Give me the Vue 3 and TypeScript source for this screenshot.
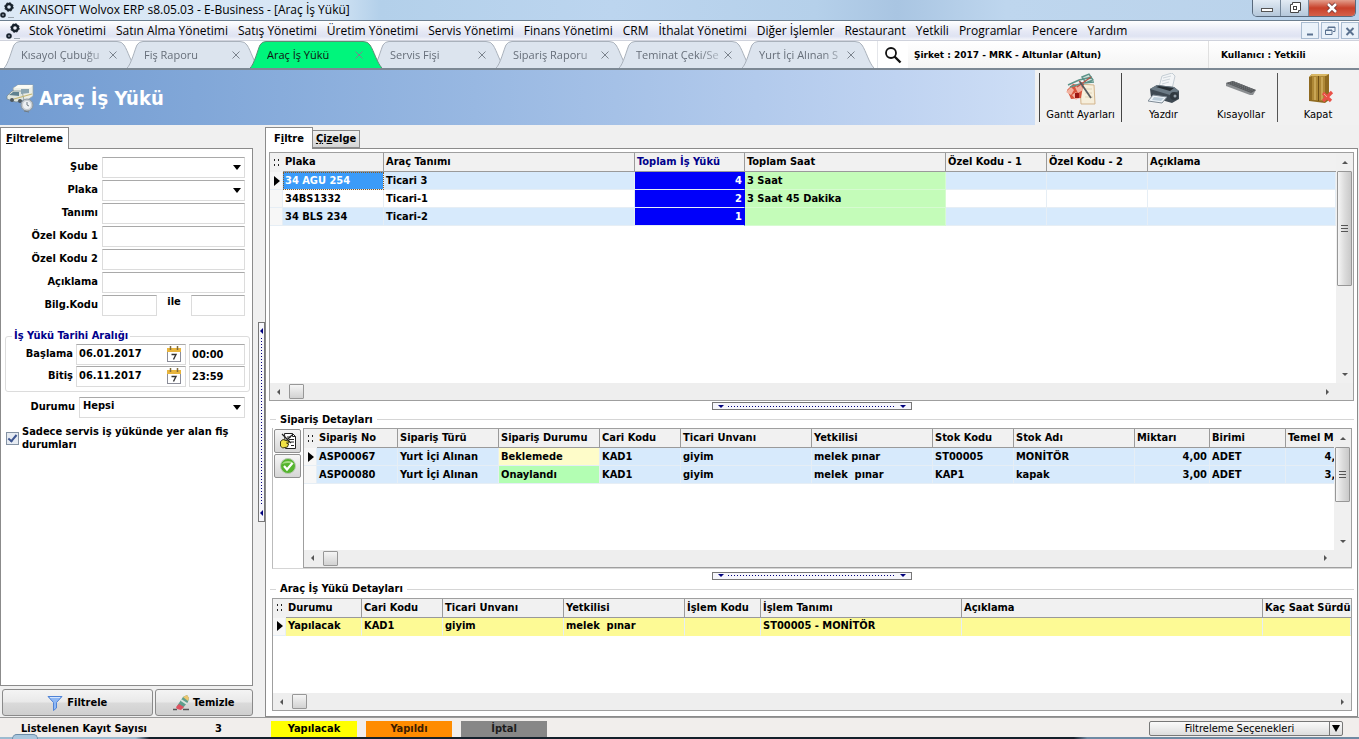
<script setup lang="ts">
import { ref } from 'vue'

interface Column {
  title: string
  width?: number
  numeric?: boolean
  accent?: boolean
}
interface Cell {
  text: string
  tone?: string
}
interface Grid {
  id: string
  label: string
  columns: Column[]
  rows: Cell[][]
  vertical: boolean
}

const t = (text: string, tone?: string): Cell => ({ text, tone })

const menus = [
  'Stok Yönetimi', 'Satın Alma Yönetimi', 'Satış Yönetimi', 'Üretim Yönetimi', 'Servis Yönetimi',
  'Finans Yönetimi', 'CRM', 'İthalat Yönetimi', 'Diğer İşlemler', 'Restaurant', 'Yetkili',
  'Programlar', 'Pencere', 'Yardım',
]
const tabs = [
  'Kısayol Çubuğu', 'Fiş Raporu', 'Araç İş Yükü', 'Servis Fişi', 'Sipariş Raporu', 'Teminat Çeki/Se', 'Yurt İçi Alınan S',
]
const activeTab = ref(2)

const vehicles: Grid = {
  id: 'vehicles',
  label: 'Araçlar',
  vertical: true,
  columns: [
    { title: 'Plaka', width: 101 },
    { title: 'Araç Tanımı', width: 251 },
    { title: 'Toplam İş Yükü', width: 110, numeric: true, accent: true },
    { title: 'Toplam Saat', width: 201 },
    { title: 'Özel Kodu - 1', width: 101 },
    { title: 'Özel Kodu - 2', width: 101 },
    { title: 'Açıklama' },
  ],
  rows: [
    [t('34 AGU 254', 'selected'), t('Ticari 3'), t('4', 'load'), t('3 Saat', 'hours'), t(''), t(''), t('')],
    [t('34BS1332'), t('Ticari-1'), t('2', 'load'), t('3 Saat 45 Dakika', 'hours'), t(''), t(''), t('')],
    [t('34 BLS 234'), t('Ticari-2'), t('1', 'load'), t('', 'hours'), t(''), t(''), t('')],
  ],
}
const orders: Grid = {
  id: 'orders',
  label: 'Sipariş Detayları',
  vertical: true,
  columns: [
    { title: 'Sipariş No', width: 81 },
    { title: 'Sipariş Türü', width: 101 },
    { title: 'Sipariş Durumu', width: 101 },
    { title: 'Cari Kodu', width: 81 },
    { title: 'Ticari Unvanı', width: 131 },
    { title: 'Yetkilisi', width: 121 },
    { title: 'Stok Kodu', width: 81 },
    { title: 'Stok Adı', width: 121 },
    { title: 'Miktarı', width: 75, numeric: true },
    { title: 'Birimi', width: 76 },
    { title: 'Temel Miktarı', width: 66, numeric: true },
  ],
  rows: [
    [t('ASP00067'), t('Yurt İçi Alınan'), t('Beklemede', 'waiting'), t('KAD1'), t('giyim'), t('melek pınar'), t('ST00005'), t('MONİTÖR'), t('4,00'), t('ADET'), t('4,00')],
    [t('ASP00080'), t('Yurt İçi Alınan'), t('Onaylandı', 'approved'), t('KAD1'), t('giyim'), t('melek  pınar'), t('KAP1'), t('kapak'), t('3,00'), t('ADET'), t('3,00')],
  ],
}
const loads: Grid = {
  id: 'loads',
  label: 'Araç İş Yükü Detayları',
  vertical: false,
  columns: [
    { title: 'Durumu', width: 76 },
    { title: 'Cari Kodu', width: 81 },
    { title: 'Ticari Unvanı', width: 121 },
    { title: 'Yetkilisi', width: 121 },
    { title: 'İşlem Kodu', width: 76 },
    { title: 'İşlem Tanımı', width: 201 },
    { title: 'Açıklama', width: 301 },
    { title: 'Kaç Saat Sürdü' },
  ],
  rows: [
    [t('Yapılacak'), t('KAD1'), t('giyim'), t('melek  pınar'), t(''), t('ST00005 - MONİTÖR'), t(''), t('')],
  ],
}
const grids: Grid[] = [vehicles, orders, loads]

const textFields = [
  { id: 'tanimi', label: 'Tanımı' },
  { id: 'ozel1', label: 'Özel Kodu 1' },
  { id: 'ozel2', label: 'Özel Kodu 2' },
  { id: 'aciklama', label: 'Açıklama' },
]
const dates = ref([
  { id: 'baslama', label: 'Başlama', day: '06.01.2017', hour: '00:00' },
  { id: 'bitis', label: 'Bitiş', day: '06.11.2017', hour: '23:59' },
])
const onlyService = ref(true)
</script>

<template>
  <div class="app">
    <header class="titlebar">
      <svg class="gear" viewBox="0 0 16 18" aria-hidden="true">
        <circle cx="9" cy="6" r="3" fill="none" stroke="#18222c" stroke-width="2.4" />
        <circle cx="9" cy="6" r="4.4" fill="none" stroke="#18222c" stroke-width=".7" stroke-dasharray="2 1.4" />
        <circle cx="3" cy="14" r="1.8" fill="none" stroke="#18222c" stroke-width="2" />
        <path d="M8 16.500h6" stroke="#9aa5ae" stroke-width="1" />
      </svg>
      <h1>AKINSOFT Wolvox ERP s8.05.03 - E-Business - [Araç İş Yükü]</h1>
      <div class="window-buttons">
        <button type="button" aria-label="Simge durumuna küçült">
          <svg viewBox="0 0 14 12"><rect x="1.500" y="6.500" width="11" height="3" fill="#fff" stroke="#555" /></svg>
        </button>
        <button type="button" aria-label="Önceki boyut">
          <svg viewBox="0 0 14 12"><path d="M4.500 .5h8v8h-2v2h-8v-8h2z" fill="#fff" stroke="#444" /><rect x="5.500" y="4.500" width="3" height="3" fill="none" stroke="#444" /></svg>
        </button>
        <button type="button" class="close" aria-label="Kapat">
          <svg viewBox="0 0 14 12"><path d="M3 2l8 8M11 2l-8 8" stroke="#6b3030" stroke-width="4" /><path d="M3 2l8 8M11 2l-8 8" stroke="#fff" stroke-width="2.500" /></svg>
        </button>
      </div>
    </header>

    <nav class="menubar">
      <svg class="gear" viewBox="0 0 16 18" aria-hidden="true">
        <circle cx="9" cy="6" r="3" fill="none" stroke="#18222c" stroke-width="2.4" />
        <circle cx="9" cy="6" r="4.4" fill="none" stroke="#18222c" stroke-width=".7" stroke-dasharray="2 1.4" />
        <circle cx="3" cy="14" r="1.8" fill="none" stroke="#18222c" stroke-width="2" />
        <path d="M8 16.500h6" stroke="#9aa5ae" stroke-width="1" />
      </svg>
      <button v-for="m in menus" :key="m" type="button" class="menu">{{ m }}</button>
      <div class="child-buttons">
        <button type="button" aria-label="Pencereyi küçült"><svg viewBox="0 0 12 12"><path d="M3 9.500h6" stroke="#5b7290" stroke-width="2" /></svg></button>
        <button type="button" aria-label="Pencereyi geri yükle"><svg viewBox="0 0 12 12"><path d="M4 4.500V2h7v4.500H9M4 2.500h7M1.500 5h6.500v4.500H1.500zM1.500 5.500H8" fill="none" stroke="#5b7290" /></svg></button>
        <button type="button" aria-label="Pencereyi kapat"><svg viewBox="0 0 12 12"><path d="M2.500 3l7 7M9.500 3l-7 7" stroke="#5b7290" stroke-width="2" /></svg></button>
      </div>
    </nav>

    <div class="tabstrip">
      <div class="tabs">
        <div v-for="(name, i) in tabs" :key="name" class="tab" :class="{ active: i === activeTab }">
          <svg class="tab-shape" viewBox="0 0 132 27" preserveAspectRatio="none" aria-hidden="true">
            <path d="M0 27C4 24 8 8 10 4Q12 .5 16 .5H113Q118 .5 120 4C124 10 127 22 132 27" />
          </svg>
          <button type="button" class="tab-name" @click="activeTab = i">{{ name }}</button>
          <button type="button" class="tab-close" :aria-label="name + ' sekmesini kapat'">
            <svg viewBox="0 0 8 8"><path d="M.5 .5l7 7M7.500 .5l-7 7" stroke="currentColor" /></svg>
          </button>
        </div>
      </div>
      <button type="button" class="search" aria-label="Ara">
        <svg viewBox="0 0 18 18"><circle cx="7" cy="7" r="5" fill="none" stroke="#111" stroke-width="1.800" /><path d="M10.500 10.500l6 6" stroke="#111" stroke-width="2.400" /></svg>
      </button>
      <div class="company">Şirket : 2017 - MRK - Altunlar (Altun)</div>
      <div class="user">Kullanıcı : Yetkili</div>
    </div>

    <section class="banner">
      <svg class="van" viewBox="0 0 28 30" aria-hidden="true">
        <path d="M7 5L12 2 27 2 27 13 20 18 8 14z" fill="#eceee6" stroke="#98a3a4" stroke-width=".7" />
        <path d="M12 2L27 2 24 5 8 5z" fill="#fbfbf4" />
        <path d="M1 13L6 8 16 8 18 17 10 19 1 16z" fill="#dfe5df" stroke="#74868c" stroke-width=".7" />
        <path d="M3 12L7 9 13 9 13 13z" fill="#5f8190" />
        <path d="M15 6h8v4l-8 1z" fill="#8ba5b1" />
        <path d="M8 16L26 11" stroke="#c5b672" stroke-width="1.200" />
        <circle cx="6" cy="17" r="2" fill="#4d575d" />
        <circle cx="14" cy="18" r="2" fill="#4d575d" />
        <circle cx="21" cy="22" r="6" fill="#c5cbd0" stroke="#8b969e" />
        <circle cx="21" cy="22" r="4" fill="#eef1f3" />
        <path d="M21 19v3l2 1M18 28l5 1" stroke="#6f7b84" fill="none" />
      </svg>
      <h2>Araç İş Yükü</h2>
      <div class="tools">
        <button type="button" class="tool gantt">
          <svg viewBox="0 0 32 32" aria-hidden="true">
            <path d="M15 11L29 12 30 31 16 31z" fill="#f6eedb" stroke="#d3b58d" />
            <path d="M19 16h8M20 20h7M20 24h8" stroke="#e0d4b8" />
            <path d="M2 17L8 11 18 13 16 25 6 26z" fill="#d8553d" />
            <path d="M1 19l5-5 3 3-3 5zM10 14l6-2 2 5-5 3zM7 22l4-3 3 5-3 3z" fill="#f2b3a0" />
            <rect x="10" y="20" width="4" height="5" fill="#9c1713" />
            <path d="M3 12L14 7 27 4M5 14L18 10 29 9M17 4l7-3 4 6-7 3z" stroke="#5d9389" stroke-width="1.400" fill="#cfe0d9" />
            <path d="M14 8l5 4M12 14l14-10" stroke="#b9564a" stroke-width="1.300" />
            <path d="M15 9L26 25" stroke="#54595e" stroke-width="1.800" />
          </svg>
          <span>Gantt Ayarları</span>
        </button>
        <button type="button" class="tool print">
          <svg viewBox="0 0 32 32" aria-hidden="true">
            <path d="M11 14L14 3 24 0 27 3 24 16z" fill="#f3f5f7" stroke="#c3ccd3" />
            <path d="M15 5l8-2M14 8l8-2M14 11l7-2" stroke="#c3ccd3" stroke-width=".8" />
            <path d="M2 16L9 12 26 14 31 18 31 26 24 30 3 24z" fill="#3f4a53" />
            <path d="M2 16L9 12 26 14 31 18 22 22z" fill="#6b7a85" />
            <path d="M8 14L11 13 26 15 22 18z" fill="#252c32" />
            <circle cx="26" cy="23" r="4" fill="#303940" />
            <circle cx="27" cy="23" r="1.500" fill="#95a1aa" />
            <path d="M5 22L19 24 14 30 0 28z" fill="#edf3f8" stroke="#7f8b95" />
            <path d="M6 24l10 1-3 3-9-1z" fill="#bccdd9" />
          </svg>
          <span>Yazdır</span>
        </button>
        <button type="button" class="tool keys">
          <svg viewBox="0 0 32 32" aria-hidden="true">
            <path d="M1 10L8 8 31 17 28 22 25 22 1 13z" fill="#8b8e91" />
            <path d="M1 10L8 8 31 17 26 20z" fill="#55585b" />
            <path d="M4 10l22 8.500M6 9l22 8.500M8 8.500l20 8" stroke="#808487" stroke-dasharray="1 1" stroke-width=".8" />
          </svg>
          <span>Kısayollar</span>
        </button>
        <button type="button" class="tool exit">
          <svg viewBox="0 0 32 32" aria-hidden="true">
            <path d="M7 4L10 1 27 1 27 27 23 30 7 28z" fill="#8f6a20" />
            <path d="M10 3h13v25L10 27z" fill="#ae8836" />
            <path d="M13 4v23M20 4v23" stroke="#c9a656" stroke-width="2" />
            <path d="M16.500 2v26" stroke="#6f4f14" />
            <path d="M7 4L10 1 27 1 24 3 10 3z" fill="#d8b765" />
            <path d="M21 20l8 8M30 19l-9 9" stroke="#ea5148" stroke-width="3.200" />
            <path d="M22 21l3 3" stroke="#f6a095" />
          </svg>
          <span>Kapat</span>
        </button>
      </div>
    </section>

    <main class="workspace">
      <aside class="filter">
        <div class="filter-tabs"><button type="button" class="page-tab"><u>F</u>iltreleme</button></div>
        <form class="filter-body" @submit.prevent>
          <div class="field">
            <label for="sube">Şube</label>
            <div class="combo"><select id="sube"><option></option></select><i class="caret"></i></div>
          </div>
          <div class="field">
            <label for="plaka">Plaka</label>
            <div class="combo"><select id="plaka"><option></option></select><i class="caret"></i></div>
          </div>
          <div v-for="f in textFields" :key="f.id" class="field">
            <label :for="f.id">{{ f.label }}</label>
            <input :id="f.id" type="text" />
          </div>
          <div class="field">
            <label for="bilg1">Bilg.Kodu</label>
            <div class="range">
              <input id="bilg1" type="text" />
              <label for="bilg2">ile</label>
              <input id="bilg2" type="text" />
            </div>
          </div>

          <fieldset class="dates">
            <legend>İş Yükü Tarihi Aralığı</legend>
            <div v-for="d in dates" :key="d.id" class="date-row">
              <label :for="d.id">{{ d.label }}</label>
              <div class="date-box">
                <input :id="d.id" v-model="d.day" type="text" />
                <button type="button" :aria-label="d.label + ' takvimi'">
                  <svg viewBox="0 0 14 16">
                    <rect x=".5" y="2.500" width="13" height="13" fill="#fff" stroke="#8b8d99" />
                    <rect x="0" y="2" width="14" height="4" fill="#e8b53d" />
                    <path d="M3.500 0v4M10.500 0v4" stroke="#7f6a3a" stroke-width="1.500" />
                    <path d="M4.500 8.500h4.500l-2.500 5" fill="none" stroke="#333" stroke-width="1.400" />
                  </svg>
                </button>
              </div>
              <input v-model="d.hour" class="hour" type="text" :aria-label="d.label + ' saati'" />
            </div>
          </fieldset>

          <div class="field state">
            <label for="durumu">Durumu</label>
            <div class="combo"><select id="durumu"><option>Hepsi</option></select><i class="caret"></i></div>
          </div>
          <label class="check">
            <input v-model="onlyService" type="checkbox" />
            <span>Sadece servis iş yükünde yer alan fiş durumları</span>
          </label>
        </form>
        <div class="filter-actions">
          <button type="button" class="run">
            <svg viewBox="0 0 16 16" aria-hidden="true"><path d="M1 1.500h14L9.500 7.500V13l-3 2.500v-8z" fill="#8fb8f4" stroke="#4f83d6" /><path d="M3 2.500h10" stroke="#d5e5fd" /></svg>
            Filtrele
          </button>
          <button type="button" class="clear">
            <svg viewBox="0 0 16 16" aria-hidden="true">
              <path d="M0 14.500h4M10 14.500h6" stroke="#555" stroke-width="1.500" />
              <path d="M4 11L10 2 14 0 16 3 15 7 9 14 5 14z" fill="#5f9f8e" />
              <path d="M10 2L14 0 16 3 15 6z" fill="#edc66f" />
              <path d="M8 5l6 4" stroke="#d9e5dd" stroke-width="2" />
              <path d="M3 12l3-3 5 3-3 3-4-1z" fill="#df5260" />
            </svg>
            Temizle
          </button>
        </div>
      </aside>

      <div class="side-splitter"><button type="button" class="grip upright" aria-label="Filtre panelini daralt"><i></i><b></b><i></i></button></div>

      <section class="content">
        <div class="content-tabs">
          <button type="button" class="page-tab">F<u>i</u>ltre</button>
          <button type="button" class="page-tab idle"><u>Ç</u>i<u>z</u>elge</button>
        </div>
        <div class="content-body">
          <template v-for="g in grids" :key="g.id">
            <template v-if="g.id !== 'vehicles'">
              <div class="handle-row"><button type="button" class="grip" :aria-label="g.label + ' bölümünü daralt'"><i></i><b></b><i></i></button></div>
              <h3 class="group-title">{{ g.label }}</h3>
            </template>
            <div class="pane" :class="g.id">
              <div v-if="g.id === 'orders'" class="side-tools">
                <button type="button" aria-label="Fişi düzenle">
                  <svg viewBox="0 0 18 18">
                    <path d="M5.500 1.500h8l3 3v12h-10z" fill="#fff" stroke="#222" />
                    <path d="M13.500 1.500v3h3M8 5h4M10 7.500h5M12 10h3M12 13.500h3" stroke="#222" fill="none" />
                    <path d="M3 2l9 9M13 3L7 9" stroke="#222" stroke-width="1.200" />
                    <path d="M1.500 9.500L4 7.500l6 2v1.500H7.500l2 1-1 3-5 1-2-2z" fill="#f0e244" stroke="#3d3a12" />
                  </svg>
                </button>
                <button type="button" aria-label="Onayla">
                  <svg viewBox="0 0 18 18"><circle cx="9" cy="9" r="7.500" fill="#55b52f" stroke="#b9c9b2" /><path d="M3 7a6.500 5 0 0 1 12 0q-6-2-12 0z" fill="#a6dc83" /><path d="M5 9l3 3.500L13.500 6" fill="none" stroke="#fff" stroke-width="2.200" /></svg>
                </button>
              </div>
              <div class="grid-frame" :class="{ scrolls: g.vertical }">
                <div class="viewport">
                  <table :aria-label="g.label">
                    <colgroup>
                      <col class="marker-col" />
                      <col v-for="c in g.columns" :key="c.title" :style="c.width ? { width: c.width + 'px' } : undefined" />
                    </colgroup>
                    <thead>
                      <tr>
                        <th class="marker"><svg viewBox="0 0 8 8" aria-hidden="true"><path d="M1 0h1v2h-1zM5 0h1v2h-1zM1 5h1v2h-1zM5 5h1v2h-1z" fill="#222" /></svg></th>
                        <th v-for="c in g.columns" :key="c.title" scope="col" :class="{ accent: c.accent }">{{ c.title }}</th>
                      </tr>
                    </thead>
                    <tbody>
                      <tr v-for="(row, r) in g.rows" :key="r">
                        <td class="marker"><svg v-if="r === 0" viewBox="0 0 6 10" aria-hidden="true"><path d="M0 0l6 5-6 5z" fill="#000" /></svg></td>
                        <td v-for="(cell, c) in row" :key="c" :class="['cell', cell.tone, { numeric: g.columns[c].numeric }]">{{ cell.text }}</td>
                      </tr>
                    </tbody>
                  </table>
                </div>
                <div v-if="g.vertical" class="vbar">
                  <i class="arrow up"></i>
                  <div class="vtrack"><div class="vthumb"><b></b></div></div>
                  <i class="arrow down"></i>
                </div>
                <div class="hbar"><i class="arrow left"></i><div class="hthumb"></div><i class="arrow right"></i></div>
              </div>
            </div>
          </template>
        </div>
      </section>
    </main>

    <footer class="status">
      <span class="count-label">Listelenen Kayıt Sayısı</span>
      <span class="count">3</span>
      <span class="badge todo">Yapılacak</span>
      <span class="badge done">Yapıldı</span>
      <span class="badge cancelled">İptal</span>
      <button type="button" class="options"><span>Filtreleme Seçenekleri</span><i></i></button>
    </footer>
    <div class="taskbar"><i></i></div>
  </div>
</template>

<style>
body { margin: 0; }
</style>

<style scoped>
* { box-sizing: border-box; }
.app {
  display: flex; flex-direction: column; height: 100vh; min-height: 620px; overflow: hidden;
  background: #f0f0f0; color: #000;
  font: bold 11px/14px "DejaVu Sans Condensed", "DejaVu Sans", sans-serif;
}
button, input, select { font: inherit; color: inherit; margin: 0; padding: 0; border: 0; background: none; border-radius: 0; }
h1, h2, h3 { margin: 0; font: inherit; }
svg { display: block; }

.titlebar, .menubar { font: 12px/16px "Open Sans", "Noto Sans", sans-serif; }
.titlebar {
  display: flex; align-items: center; flex: none; height: 21px; border-bottom: 1px solid #6d7f8f;
  background: linear-gradient(90deg, #dce9f6 0, #d6e6f5 24%, #b3d0ea 28%, #bcd5ef 45%, #b5d0ea 60%, #a9c5e2 66%, #bed6ee 74%, #b9d2ea 100%);
}
.gear { width: 16px; height: 18px; flex: none; }
.titlebar h1 { margin-left: 4px; font-weight: 400; flex: 1; white-space: nowrap; }
.window-buttons { display: flex; align-self: flex-start; margin-right: 3px; border: 1px solid #58697c; border-top: 0; border-radius: 0 0 5px 5px; overflow: hidden; }
.window-buttons button { display: grid; place-items: center; width: 28px; height: 16px; background: linear-gradient(#e2ebf4, #b4c7da); border-right: 1px solid #74879a; }
.window-buttons button.close { width: 46px; border: 0; background: linear-gradient(#e39e8c, #c8402a 50%, #d5614a); }
.window-buttons svg { width: 14px; height: 12px; }

.menubar { display: flex; align-items: center; flex: none; height: 20px; padding-left: 6px; background: linear-gradient(#fff, #e6e9f5 55%, #dfe3f2 80%, #f4f5fa); border-bottom: 1px solid #cfd2dc; }
.menu { margin-left: 10px; white-space: nowrap; }
.menubar .gear + .menu { margin-left: 7px; }
.child-buttons { display: flex; gap: 2px; margin-left: auto; }
.child-buttons button { display: grid; place-items: center; width: 18px; height: 17px; border: 1px solid #a9bcd1; background: #eaf2fa; }
.child-buttons svg { width: 12px; height: 12px; }

.tabstrip { display: flex; flex: none; height: 29px; background: #fff; border-bottom: 2px solid #7c8894; font: 11px/16px "Open Sans", "Noto Sans", sans-serif; }
.tabs { display: flex; padding-left: 4px; }
.tab { position: relative; display: flex; align-items: center; width: 132px; padding: 1px 19px 0 17px; margin-right: -9px; color: #666e79; }
.tab.active { z-index: 1; color: #111; }
.tab-shape { position: absolute; inset: 0; width: 100%; height: 100%; }
.tab-shape path { fill: #dce4ee; stroke: #a9b1bb; }
.tab.active .tab-shape path { fill: #00f57c; stroke: #5d8d74; }
.tab-name { position: relative; flex: 1; min-width: 0; overflow: hidden; white-space: nowrap; text-align: left; mask-image: linear-gradient(90deg, #000 75%, rgba(0, 0, 0, .3)); }
.tab.active .tab-name { mask-image: none; }
.tab-close { position: relative; width: 8px; height: 8px; margin-left: 4px; color: #7b838d; }
.search { display: grid; place-items: center; width: 31px; margin-left: 12px; border-left: 1px solid #e4e6ea; }
.search svg { width: 18px; height: 18px; }
.company, .user { display: flex; align-items: center; background: linear-gradient(#fff, #f4f4f4); font: bold 9px/14px "DejaVu Sans", sans-serif; white-space: nowrap; }
.company { flex: 1; padding-left: 6px; }
.user { width: 151px; padding-left: 12px; border-left: 1px solid #e0e0e0; }

.banner { display: flex; align-items: center; flex: none; height: 55px; padding-left: 6px; background: linear-gradient(90deg, #719bd1, #98b8e2 35%, #bfd3f1 66%, #cfdff6 77%); }
.van { width: 28px; height: 30px; }
.banner h2 { margin-left: 5px; color: #fff; font-size: 20px; line-height: 26px; flex: 1; white-space: nowrap; }
.tools { display: flex; align-items: center; height: 100%; padding: 0 1px 0 4px; background: #f1f1f1; }
.tool { display: flex; flex-direction: column; align-items: center; justify-content: space-between; height: 49px; font-weight: 400; white-space: nowrap; }
.tool svg { width: 32px; height: 32px; }
.gantt { width: 83px; border: solid #444; border-width: 0 1px; }
.print { width: 83px; }
.keys { box-sizing: content-box; width: 72px; border-right: 1px solid #555; }
.exit { width: 80px; }

.workspace { display: flex; flex: 1; min-height: 0; padding-top: 2px; }
.filter { display: flex; flex-direction: column; flex: none; width: 253px; }
.page-tab { height: 22px; padding: 0 5px; border: solid #8b8b8b; border-width: 1px 1px 0; background: #fff; white-space: nowrap; }
.filter-tabs { display: flex; height: 21px; position: relative; z-index: 1; }
.filter-body { flex: 1; min-height: 0; padding: 7px 7px 0 6px; border: 1px solid #8b8b8b; background: #fff; }
.field { display: grid; grid-template-columns: 91px 143px; column-gap: 4px; align-items: center; height: 22px; margin-bottom: 1px; }
.field > label { text-align: right; }
.field input, .combo, .date-box, .hour { width: 100%; height: 21px; border: 1px solid #dcdcdc; border-top-color: #a9a9a9; background: #fff; min-width: 0; }
.combo { position: relative; }
.combo select { display: block; width: 100%; height: 17px; padding: 0 3px; appearance: none; }
.caret { position: absolute; right: 3px; top: 7px; border: solid transparent; border-width: 5px 4px 0; border-top-color: #000; pointer-events: none; }
.range { display: grid; grid-template-columns: 55px 1fr 54px; text-align: center; }
.dates { min-width: 0; margin: 13px -5px 4px -2px; padding: 0 5px 4px 4px; border: 1px solid #dcdcdc; border-radius: 3px; }
.dates legend { margin-left: 2px; padding: 0 2px; color: #00008b; }
.date-row { display: grid; grid-template-columns: 63px 110px 56px; column-gap: 3px; align-items: center; height: 22px; }
.date-row label { text-align: right; }
.date-box { display: flex; align-items: center; }
.date-box input { flex: 1; min-width: 0; padding-left: 2px; }
.date-box button { width: 14px; height: 16px; margin-right: 4px; }
.hour { padding-left: 2px; }
.state { grid-template-columns: 68px 166px; }
.check { display: flex; align-items: center; gap: 3px; margin-top: 7px; line-height: 13px; }
.check span { width: 220px; }
.check input { flex: none; display: grid; place-items: center; appearance: none; width: 13px; height: 13px; margin-left: -1px; border: 1px solid #8492a3; background: #e6ebf2; }
.check input:checked::after { content: ""; width: 3px; height: 7px; margin-bottom: 2px; border: solid #3d5590; border-width: 0 2px 2px 0; transform: rotate(40deg); }
.filter-actions { display: flex; gap: 2px; padding: 3px 0 1px 2px; }
.filter-actions button { display: flex; align-items: center; justify-content: center; gap: 4px; height: 27px; border: 1px solid #8a8a8a; border-radius: 3px; background: linear-gradient(#f4f4f4, #e9e9e9 48%, #dadada 52%, #cfcfcf); }
.filter-actions svg { width: 16px; height: 16px; }
.run { flex: 151; }
.clear { flex: 98; }

.side-splitter { display: flex; flex: none; align-items: center; justify-content: flex-end; width: 12px; }
.grip { display: flex; align-items: center; justify-content: space-between; width: 200px; height: 8px; padding: 0 5px; border: 1px solid #777; background: #f6f6fb; }
.grip i { border: solid transparent; border-width: 3px 3px 0; border-top-color: #00007d; }
.grip b { flex: 1; margin: 0 4px; height: 1px; background: repeating-linear-gradient(90deg, #00007d 0 1px, transparent 1px 3px); }
.grip.upright { flex-direction: column; width: 7px; height: 200px; padding: 5px 0; }
.grip.upright i { border-width: 3px 3px 3px 0; border-color: transparent #00007d transparent transparent; }
.grip.upright b { width: 1px; margin: 4px 0; background: repeating-linear-gradient(#00007d 0 1px, transparent 1px 3px); }

.content { display: flex; flex-direction: column; flex: 1; min-width: 0; margin-right: 1px; }
.content-tabs { display: flex; align-items: flex-end; height: 21px; position: relative; z-index: 1; }
.content-tabs .page-tab { padding: 0 8px; margin-bottom: -1px; }
.content-tabs .idle { height: 18px; margin-bottom: 0; padding: 0 3px; border-width: 1px 1px 1px 0; background: linear-gradient(#f0f0f0, #d5d5d5); }
.content-body { display: flex; flex-direction: column; flex: 1; min-height: 0; padding: 3px 3px 5px; border: 1px solid #8b8b8b; background: #fff; }
.handle-row { display: flex; justify-content: center; flex: none; margin-top: 1px; height: 9px; }
.group-title { display: flex; align-items: center; flex: none; gap: 4px; height: 17px; padding-left: 1px; }
.group-title::before, .group-title::after { content: ""; height: 1px; background: #d5d5d5; }
.group-title::before { width: 6px; }
.group-title::after { flex: 1; }
.pane { display: flex; min-height: 0; }
.vehicles { flex: 251 1 0; }
.orders { flex: 141 1 0; margin: 0 2px 2px 3px; border-left: 1px solid #bbb; border-bottom: 1px solid #d5d5d5; }
.loads { flex: 114 1 0; margin: 0 2px 0 3px; }
.orders .grid-frame { margin-left: 2px; }
.side-tools { display: flex; flex-direction: column; gap: 1px; padding: 1px 0 0 1px; }
.side-tools button { display: grid; place-items: center; width: 27px; height: 24px; border: 1px solid #909090; border-radius: 2px; background: linear-gradient(#f6f6f6, #d6d6d6); }
.side-tools svg { width: 18px; height: 18px; }

.grid-frame { display: grid; grid-template: 1fr 17px / 1fr; flex: 1; min-width: 0; border: 1px solid #9f9f9f; background: #fff; }
.grid-frame.scrolls { grid-template-columns: 1fr 17px; }
.viewport { min-width: 0; min-height: 0; overflow: hidden; }
table { width: 100%; table-layout: fixed; border-collapse: separate; border-spacing: 0; }
.marker-col { width: 13px; }
th, td { height: 18px; padding: 0 2px; overflow: hidden; white-space: pre; text-align: left; font-weight: bold; }
th { height: 19px; background: #f1f1f1; border-bottom: 1px solid #9a9a9a; border-right: 1px solid #9a9a9a; }
th:last-child { border-right: 0; }
th.marker { border-right: 0; border-bottom: 0; }
.marker { padding: 0 0 0 3px; }
.marker svg { width: 8px; height: 8px; }
td.marker { padding-left: 4px; background: #f7f7f7; }
td.marker svg { width: 6px; height: 10px; }
th.accent { color: #00008b; }
td { border-right: 1px solid #e6eef5; border-bottom: 1px solid #e6eef5; }
td.numeric { text-align: right; }
.orders .cell, .vehicles tr:nth-child(odd) .cell { background: #d7eafc; }
.vehicles tr .cell.selected.selected { background: #3b9bf9; color: #fff; outline: 1px dotted #8b5a20; outline-offset: -1px; }
.vehicles tr .cell.load.load { background: #0000fa; color: #fff; border-right-color: #0000fa; }
.vehicles tr .cell.hours.hours { background: #c4fcb9; border-color: #d6fbd0; }
.orders .cell.waiting { background: #fefcc9; }
.orders .cell.approved { background: #b3feb3; }
.loads .cell { background: #fdfa95; border-bottom-color: #fdfa95; }

.vbar { display: flex; flex-direction: column; align-items: center; background: #f0f0f0; }
.vtrack { flex: 1; width: 15px; }
.vthumb { display: grid; place-items: center; height: 59%; border: 1px solid #979797; border-radius: 1px; background: linear-gradient(90deg, #f5f5f5, #dcdcdc 50%, #c9c9c9); }
.vthumb b { width: 7px; height: 7px; background: repeating-linear-gradient(#555 0 1px, transparent 1px 3px); }
.orders .vthumb { height: 64%; }
.hbar { grid-column: 1 / -1; display: flex; align-items: center; padding: 0 24px 0 7px; background: #eee; }
.loads .hbar { padding-right: 7px; }
.hthumb { width: 15px; height: 15px; margin: 0 auto 0 9px; border: 1px solid #979797; border-radius: 1px; background: linear-gradient(#f5f5f5, #d2d2d2); }
.arrow { flex: none; border: solid transparent; }
.arrow.up { margin: 8px 0 7px; border-width: 0 3px 3px; border-bottom-color: #555; }
.arrow.down { margin: 7px 0; border-width: 3px 3px 0; border-top-color: #555; }
.arrow.left { border-width: 3px 3px 3px 0; border-right-color: #555; }
.arrow.right { border-width: 3px 0 3px 3px; border-left-color: #555; }

.status { display: flex; align-items: center; flex: none; height: 20px; padding: 2px 16px 0 21px; border-top: 1px solid #999; background: #f1eeec; }
.count-label { width: 127px; white-space: nowrap; }
.count { width: 74px; text-align: right; }
.badge { width: 86px; height: 16px; margin-left: 9px; line-height: 15px; text-align: center; }
.todo { margin-left: 49px; background: #ff0; }
.done { background: #ff8c00; color: #3d1d00; }
.cancelled { background: #878787; color: #1c1c1c; }
.options { display: flex; width: 194px; height: 15px; margin-left: auto; border: 1px solid #777; border-radius: 2px; background: linear-gradient(#fafafa, #ddd); font-weight: 400; line-height: 13px; }
.options span { flex: 1; }
.options i { width: 13px; border-left: 1px solid #777; }
.options i::before { content: ""; display: block; margin: 3px auto 0; width: 0; border: solid transparent; border-width: 7px 4px 0; border-top-color: #000; }
.taskbar { position: relative; flex: none; height: 2px; background: linear-gradient(90deg, #9dbbd0 10%, #14202b 11%, #14202b 79%, #6f8aa3 80%); }
.taskbar i { position: absolute; left: 12px; bottom: 0; width: 26px; height: 5px; border: 1px solid #6c8ca8; border-bottom: 0; border-radius: 13px 13px 0 0; background: #a9c6dd; }
</style>
